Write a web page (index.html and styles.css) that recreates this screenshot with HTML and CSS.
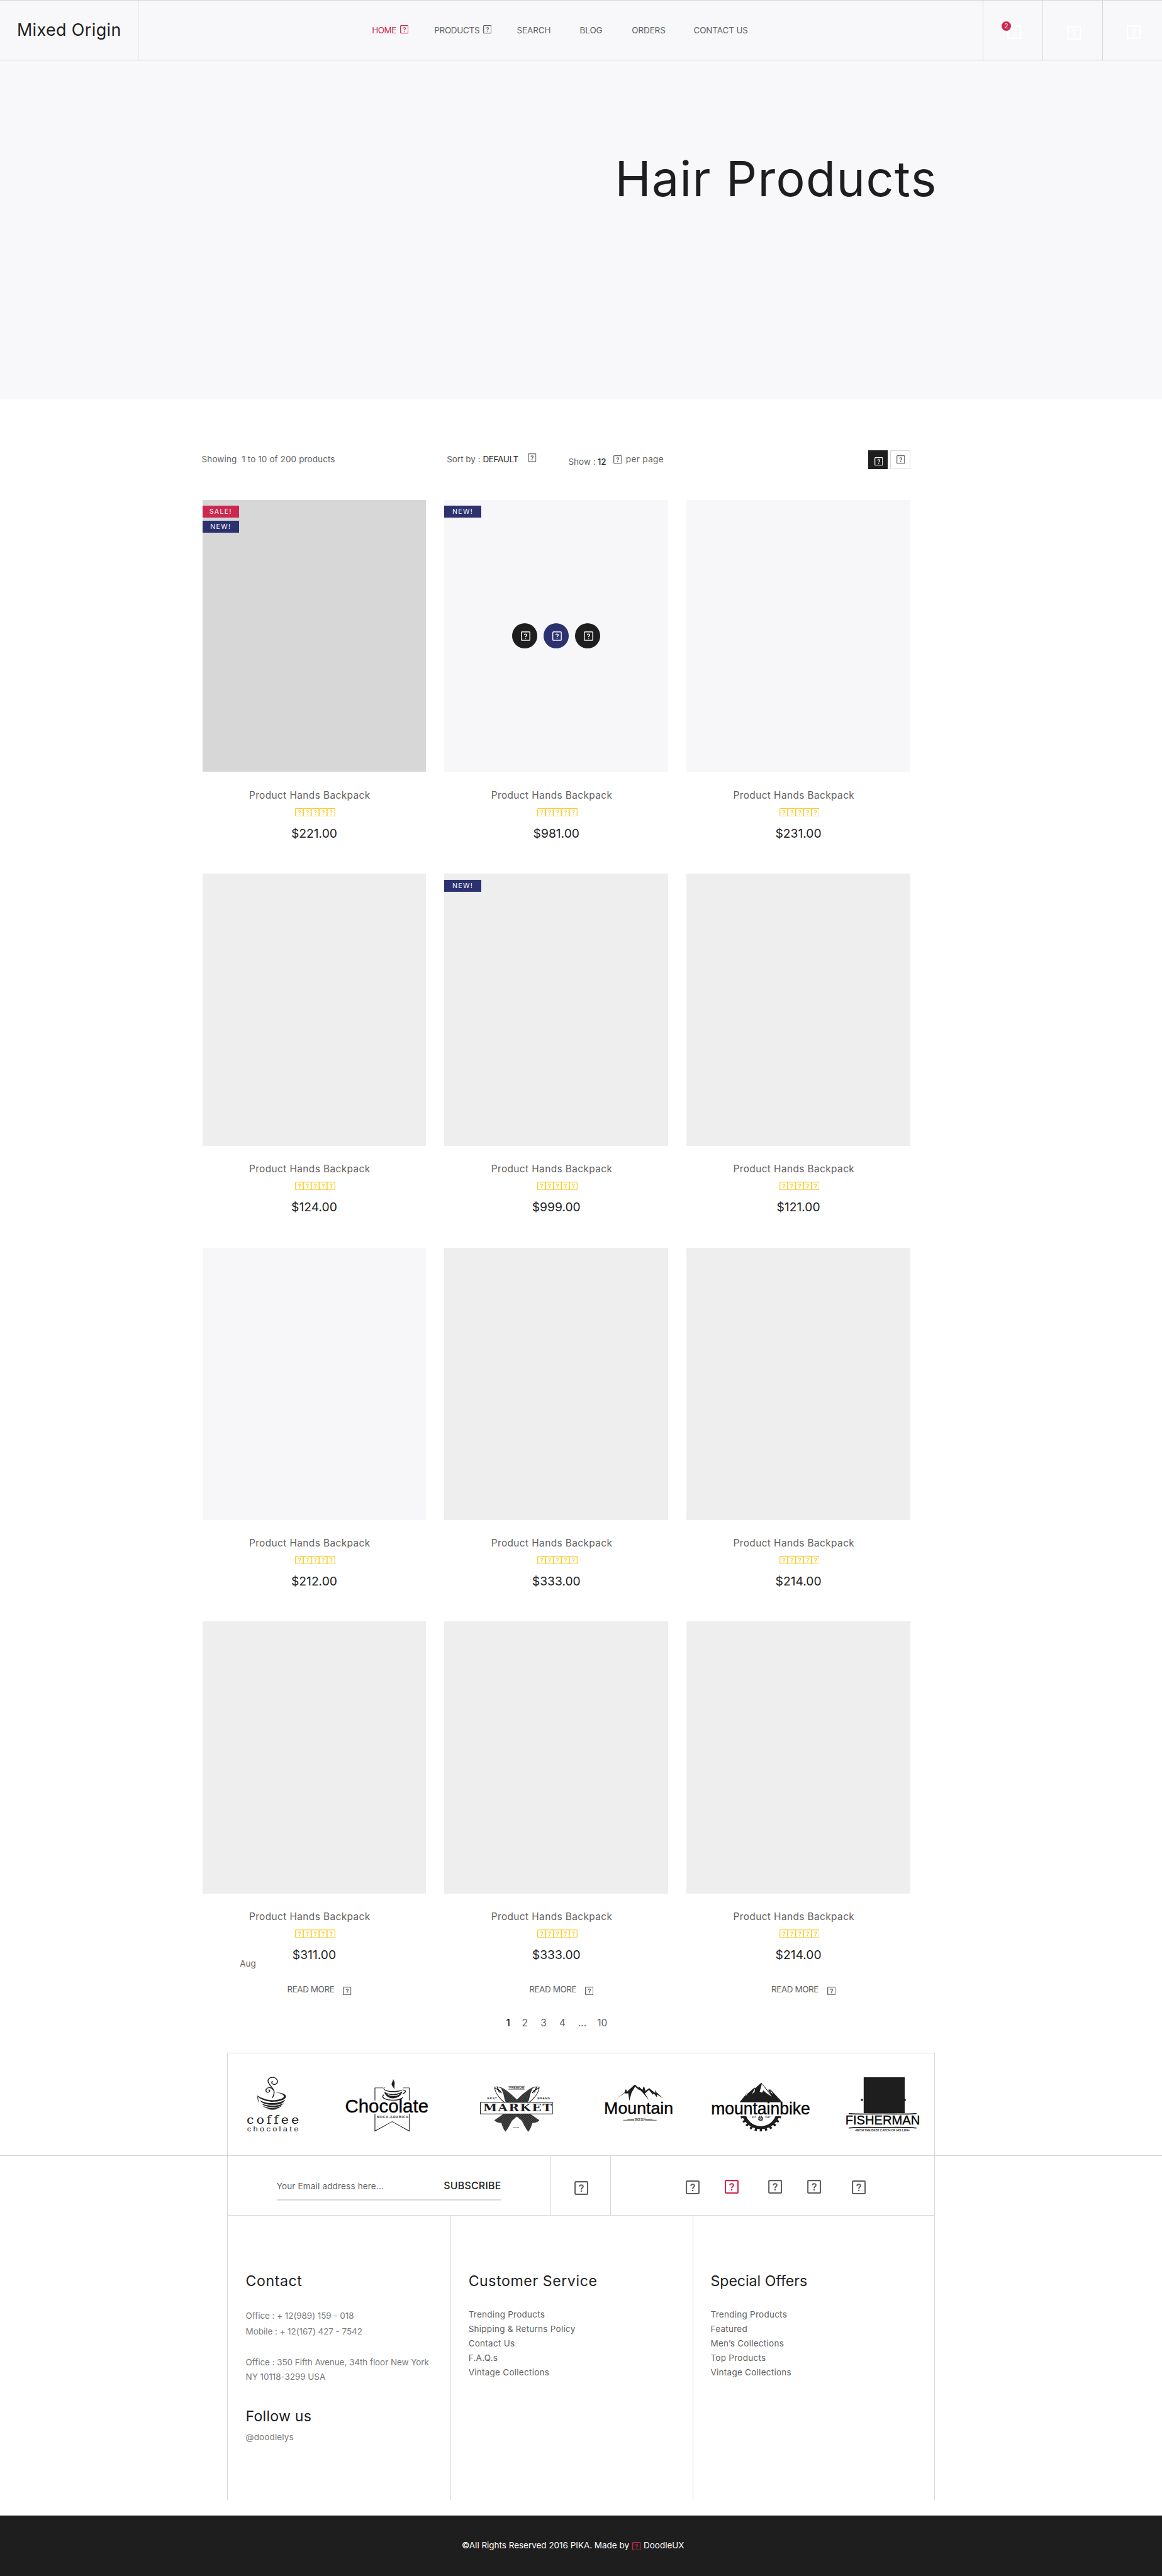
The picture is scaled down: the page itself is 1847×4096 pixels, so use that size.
FILE: index.html
```html
<!DOCTYPE html>
<html lang="en">
<head>
<meta charset="utf-8">
<title>Mixed Origin - Hair Products</title>
<link rel="stylesheet" href="styles.css">
</head>
<body>
<svg class="defs" aria-hidden="true">
  <symbol id="q" viewBox="0 0 14 14" preserveAspectRatio="none">
    <rect x=".7" y=".7" width="12.6" height="12.6" rx=".8" fill="none" stroke="currentColor" stroke-width="1.3"/>
    <path d="M5.2 5.5C5.2 3.4 8.8 3.4 8.8 5.4C8.8 6.7 7 6.7 7 8.5" fill="none" stroke="currentColor" stroke-width="1.3"/>
    <rect x="6.3" y="9.4" width="1.4" height="1.4" fill="currentColor"/>
  </symbol>
  <symbol id="stars" viewBox="0 0 67 14" preserveAspectRatio="none">
    <use href="#q" x="0" width="14.2" height="14"/><use href="#q" x="13.2" width="14.2" height="14"/><use href="#q" x="26.4" width="14.2" height="14"/><use href="#q" x="39.6" width="14.2" height="14"/><use href="#q" x="52.8" width="14.2" height="14"/>
  </symbol>
</svg>

<header class="header">
  <a class="logo">Mixed Origin</a>
  <nav class="nav">
    <a class="nav-item active">HOME<svg class="ic nav-ic"><use href="#q"/></svg></a>
    <a class="nav-item wide">PRODUCTS<svg class="ic nav-ic"><use href="#q"/></svg></a>
    <a class="nav-item">SEARCH</a>
    <a class="nav-item">BLOG</a>
    <a class="nav-item">ORDERS</a>
    <a class="nav-item">CONTACT US</a>
  </nav>
  <div class="tools">
    <a class="tool"><svg class="ic big"><use href="#q"/></svg><span class="count">2</span></a>
    <a class="tool second"><svg class="ic big"><use href="#q"/></svg></a>
    <a class="tool"><svg class="ic big"><use href="#q"/></svg></a>
  </div>
</header>

<section class="hero"><h1>Hair Products</h1></section>

<main class="shop">
  <div class="toolbar">
    <span class="showing">Showing&nbsp; 1 to 10 of 200 products</span>
    <span class="sort">Sort by :</span>
    <span class="sort-value">DEFAULT</span>
    <svg class="ic small sort-ic"><use href="#q"/></svg>
    <span class="show">Show :</span>
    <span class="show-value">12</span>
    <svg class="ic small show-ic"><use href="#q"/></svg>
    <span class="per">per page</span>
    <div class="views">
      <a class="view on"><svg class="ic small"><use href="#q"/></svg></a>
      <a class="view"><svg class="ic small"><use href="#q"/></svg></a>
    </div>
  </div>

  <div class="grid">
    <article class="card"><div class="pic dark"><span class="tag sale">SALE!</span><span class="tag">NEW!</span></div>
      <h3>Product Hands Backpack</h3><svg class="stars"><use href="#stars"/></svg><p class="price">$221.00</p></article>
    <article class="card"><div class="pic pale"><span class="tag">NEW!</span>
      <div class="actions"><a><svg class="ic mid"><use href="#q"/></svg></a><a class="blue"><svg class="ic mid"><use href="#q"/></svg></a><a><svg class="ic mid"><use href="#q"/></svg></a></div></div>
      <h3>Product Hands Backpack</h3><svg class="stars"><use href="#stars"/></svg><p class="price">$981.00</p></article>
    <article class="card"><div class="pic pale"></div>
      <h3>Product Hands Backpack</h3><svg class="stars"><use href="#stars"/></svg><p class="price">$231.00</p></article>

    <article class="card"><div class="pic"></div>
      <h3>Product Hands Backpack</h3><svg class="stars"><use href="#stars"/></svg><p class="price">$124.00</p></article>
    <article class="card"><div class="pic"><span class="tag">NEW!</span></div>
      <h3>Product Hands Backpack</h3><svg class="stars"><use href="#stars"/></svg><p class="price">$999.00</p></article>
    <article class="card"><div class="pic"></div>
      <h3>Product Hands Backpack</h3><svg class="stars"><use href="#stars"/></svg><p class="price">$121.00</p></article>

    <article class="card"><div class="pic pale"></div>
      <h3>Product Hands Backpack</h3><svg class="stars"><use href="#stars"/></svg><p class="price">$212.00</p></article>
    <article class="card"><div class="pic"></div>
      <h3>Product Hands Backpack</h3><svg class="stars"><use href="#stars"/></svg><p class="price">$333.00</p></article>
    <article class="card"><div class="pic"></div>
      <h3>Product Hands Backpack</h3><svg class="stars"><use href="#stars"/></svg><p class="price">$214.00</p></article>

    <article class="card"><div class="pic"></div>
      <h3>Product Hands Backpack</h3><svg class="stars"><use href="#stars"/></svg><p class="price">$311.00</p>
      <span class="month">Aug</span>
      <a class="more">READ MORE<svg class="ic small"><use href="#q"/></svg></a></article>
    <article class="card"><div class="pic"></div>
      <h3>Product Hands Backpack</h3><svg class="stars"><use href="#stars"/></svg><p class="price">$333.00</p>
      <a class="more">READ MORE<svg class="ic small"><use href="#q"/></svg></a></article>
    <article class="card"><div class="pic"></div>
      <h3>Product Hands Backpack</h3><svg class="stars"><use href="#stars"/></svg><p class="price">$214.00</p>
      <a class="more">READ MORE<svg class="ic small"><use href="#q"/></svg></a></article>
  </div>

  <nav class="pages"><a class="current">1</a><a>2</a><a>3</a><a>4</a><a>...</a><a>10</a></nav>
</main>

<section class="brands">
  <div class="brands-inner">
    <svg class="brand b1" viewBox="90 150 240 290" preserveAspectRatio="none">
      <g fill="none" stroke="#1e1e1e" stroke-linecap="round">
        <path d="M193 186C186 172 196 160 210 160C226 160 233 172 231 183C229 195 216 197 209 191C204 186 207 180 211 181" stroke-width="4"/>
        <path d="M193 184C196 202 215 212 217 232C218 246 213 254 210 260" stroke-width="4"/>
        <path d="M213 222C206 207 190 207 183 218C178 229 187 237 195 232C200 228 198 221 194 222" stroke-width="4"/>
      </g>
      <g fill="#1e1e1e">
        <path d="M225 235C250 234 270 244 268 257C265 272 235 282 205 281C175 277 152 266 146 254C150 272 149 284 156 293C148 284 143 262 145 250C165 265 185 272 208 273C235 273 257 265 259 255C260 245 243 238 225 235Z"/>
        <path d="M156 274C182 292 235 293 266 270C255 291 240 296 211 296C184 296 163 289 156 274Z"/>
        <path d="M162 289C187 304 235 304 259 287C248 302 236 307 211 307C186 307 171 301 162 289Z"/>
        <path d="M168 301C190 314 231 314 250 300C240 313 230 317 211 317C191 317 178 311 168 301Z"/>
        <path d="M182 314C200 320 223 320 238 314C228 322 194 323 182 314Z"/>
      </g>
      <text x="98" y="389" class="serif" font-size="56" textLength="226">coffee</text>
      <text x="100" y="429" class="sans" font-size="35" textLength="222">chocolate</text>
    </svg>
    <svg class="brand b2" viewBox="520 150 370 290" preserveAspectRatio="none">
      <path d="M653 275V212H689M775 212H801V275M653 340V426L727 379L801 426V340" fill="none" stroke="#1e1e1e" stroke-width="3"/>
      <path d="M731 162C731 176 741 180 738 194C736 202 739 212 736 218C733 206 724 202 725 192C727 182 733 178 731 162Z" fill="#1e1e1e"/>
      <path d="M701 207C686 213 691 222 711 226C735 230 761 226 773 220C765 232 735 236 711 230C687 225 683 210 701 207Z" fill="#1e1e1e"/>
      <path d="M693 231C711 246 752 247 771 229C768 248 755 262 732 264C711 263 697 251 693 231Z" fill="#1e1e1e"/>
      <path d="M703 239C717 251 748 251 763 239C754 256 715 258 703 239Z" fill="#fff"/>
      <path d="M774 223C789 220 787 237 773 240M691 246C679 258 694 270 720 272C745 275 770 269 774 258" fill="none" stroke="#1e1e1e" stroke-width="4"/>
      <text x="524" y="333" class="sans black" font-size="92" textLength="360" lengthAdjust="spacingAndGlyphs" stroke="#000" stroke-width="1.2">Chocolate</text>
      <text x="661" y="362" class="cond" font-size="14" textLength="136">MOCA-ARABICA</text>
    </svg>
    <svg class="brand b3" viewBox="1100 150 325 290" preserveAspectRatio="none">
      <defs><pattern id="scale" width="7" height="7" patternUnits="userSpaceOnUse" patternTransform="rotate(38)"><rect width="7" height="7" fill="#2a2a2a"/><rect x="1" y="1" width="3" height="2" fill="#aaa"/></pattern></defs>
      <g id="fish">
        <path d="M1168 209C1184 203 1206 213 1222 229C1241 245 1259 265 1282 292H1222C1200 278 1171 243 1168 209Z" fill="#fff" stroke="#333" stroke-width="3"/>
        <path d="M1195 212C1221 225 1250 253 1282 292H1225C1205 276 1215 250 1195 212Z" fill="url(#scale)"/>
        <path d="M1170 212C1180 222 1190 217 1198 238M1180 208L1189 235" fill="none" stroke="#222" stroke-width="4"/>
        <circle cx="1183" cy="219" r="3" fill="#111"/>
        <path d="M1313 335L1361 373C1351 383 1339 386 1331 384C1327 402 1321 417 1314 428C1303 414 1295 392 1286 374L1246 335Z" fill="url(#scale)" stroke="#333" stroke-width="2"/>
      </g>
      <use href="#fish" transform="matrix(-1 0 0 1 2529 0)"/>
      <path d="M1228 204H1298M1228 219H1298" stroke="#333" stroke-width="2"/>
      <text x="1232" y="216" class="cond" font-size="13" textLength="64">PREMIUM</text>
      <text x="1137" y="267" class="cond" font-size="13" textLength="41">BEST</text>
      <text x="1353" y="269" class="cond" font-size="13" textLength="54">BRAND</text>
      <rect x="1107" y="284" width="311" height="57" fill="#fff" stroke="#1e1e1e" stroke-width="3"/>
      <text x="1119" y="329" class="slab" font-size="54" textLength="296">MARKET</text>
      <text x="1248" y="408" class="cond" font-size="7" textLength="26">EST 1989</text>
    </svg>
    <svg class="brand b4" viewBox="95 150 305 290" preserveAspectRatio="none">
      <path d="M152 267L187 234L190 221L194 219L197 231L231 195L247 211L250 207L264 222L268 207L272 207L277 227L293 213L319 237L318 221L323 233L353 263L326 244L327 259L313 240L309 246L292 222L279 236L274 238L293 274L265 236L255 224L247 220L232 206L217 236L207 277L203 239L191 240L186 238Z" fill="#1e1e1e"/>
      <text x="98" y="339" class="sans black" font-size="83" textLength="299" lengthAdjust="spacingAndGlyphs" stroke="#000" stroke-width="1.2">Mountain</text>
      <path d="M181 372H227V368H199M325 372H279V368H307" fill="none" stroke="#555" stroke-width="3"/>
      <text x="230" y="374" class="cond" font-size="14" textLength="46" lengthAdjust="spacingAndGlyphs">SINCE 2014</text>
    </svg>
    <svg class="brand b5" viewBox="555 150 440 290" preserveAspectRatio="none">
      <path d="M684 283L716 238L718 241L748 211L752 213L778 187L818 241L807 221L818 220L864 277V283Z" fill="#1e1e1e"/>
      <path d="M780 193L824 255L804 241L797 235L787 224L781 236L771 231ZM751 214L737 243L749 231ZM816 222L829 243L820 236ZM716 240L709 253L716 247Z" fill="#fff"/>
      <clipPath id="half"><rect x="680" y="352" width="195" height="85"/></clipPath>
      <g clip-path="url(#half)" fill="none" stroke="#1e1e1e">
        <ellipse cx="776" cy="330" rx="74" ry="79" stroke-width="15"/>
        <ellipse cx="776" cy="330" rx="84" ry="91" stroke-width="13" stroke-dasharray="10 12"/>
      </g>
      <ellipse cx="775" cy="364" rx="7" ry="8" fill="none" stroke="#1e1e1e" stroke-width="4"/>
      <ellipse cx="775" cy="364" rx="10" ry="11.500" fill="none" stroke="#1e1e1e" stroke-width="3" stroke-dasharray="4 4.500"/>
      <circle cx="775" cy="364" r="2" fill="#1e1e1e"/>
      <text x="561" y="342" class="sans black" font-size="85" textLength="428" lengthAdjust="spacingAndGlyphs" stroke="#000" stroke-width="1.2">mountainbike</text>
      <text x="737" y="362" class="cond" font-size="8" textLength="20">EST.</text>
      <text x="794" y="362" class="cond" font-size="8" textLength="23">1987</text>
    </svg>
    <svg class="brand b6" viewBox="1140 150 325 290" preserveAspectRatio="none">
      <path d="M1221 159H1398V338H1221ZM1209 267H1218V276H1209ZM1398 267H1403V276H1398Z" fill="#1e1e1e"/>
      <path d="M1156 339C1210 344 1250 341 1303 341S1400 344 1449 339M1156 411C1210 406 1250 408 1303 408S1400 406 1449 411" fill="none" stroke="#1e1e1e" stroke-width="5"/>
      <text x="1142" y="392" class="sans black" font-size="62" textLength="322" lengthAdjust="spacingAndGlyphs" stroke="#000" stroke-width="1">FISHERMAN</text>
      <text x="1184" y="429" class="cond" font-size="15" textLength="235" lengthAdjust="spacingAndGlyphs">•WITH THE BEST CATCH OF HIS LIFE•</text>
    </svg>
  </div>
</section>

<section class="subscribe">
  <div class="mail"><div class="field"><span>Your Email address here...</span><b>SUBSCRIBE</b></div></div>
  <div class="mid-cell"><svg class="ic big"><use href="#q"/></svg></div>
  <div class="social">
    <svg class="ic big s1"><use href="#q"/></svg><svg class="ic big s2"><use href="#q"/></svg><svg class="ic big s3"><use href="#q"/></svg><svg class="ic big s4"><use href="#q"/></svg><svg class="ic big s5"><use href="#q"/></svg>
  </div>
</section>

<section class="columns">
  <div class="col contact">
    <h2>Contact</h2>
    <p class="phone">Office : + 12(989) 159 - 018</p>
    <p class="mobile">Mobile : + 12(167) 427 - 7542</p>
    <p class="address">Office : 350 Fifth Avenue, 34th floor New York<br>NY 10118-3299 USA</p>
    <h2 class="follow">Follow us</h2>
    <p class="handle">@doodlelys</p>
  </div>
  <div class="col">
    <h2>Customer Service</h2>
    <ul><li>Trending Products</li><li>Shipping &amp; Returns Policy</li><li>Contact Us</li><li>F.A.Q.s</li><li>Vintage Collections</li></ul>
  </div>
  <div class="col">
    <h2 class="offers">Special Offers</h2>
    <ul><li>Trending Products</li><li>Featured</li><li>Men’s Collections</li><li>Top Products</li><li>Vintage Collections</li></ul>
  </div>
</section>

<footer class="footer"><span class="copy">©All Rights Reserved 2016 PIKA. Made by</span><svg class="ic small"><use href="#q"/></svg><span class="maker">DoodleUX</span></footer>
</body>
</html>
```

FILE: styles.css
```css
* { box-sizing: border-box; }
html { font-size: 9.62px; }
body {
  margin: 0;
  min-height: 100vh;
  display: flex;
  flex-direction: column;
  background: #fff;
  color: #5f5f5f;
  font: 1.4rem/2rem Inter, "Liberation Sans", sans-serif;
  overflow-x: hidden;
}
h1, h2, h3, p, ul { margin: 0; padding: 0; font-weight: 400; }
ul { list-style: none; }
.defs { position: absolute; width: 0; height: 0; }

.ic { display: block; flex: none; }
.small { width: 1.4rem; height: 1.4rem; }
.mid { width: 1.55rem; height: 1.55rem; }
.big { width: 2.3rem; height: 2.3rem; }

/* header */
.header {
  height: 10rem;
  display: flex;
  background: #f8f8fa;
  border-top: 1px solid #d7d7da;
  border-bottom: 1px solid #d7d7da;
}
.logo {
  width: 22.85rem;
  padding: 3.05rem 0 0 2.8rem;
  border-right: 1px solid #d7d7da;
  color: #1e1e1e;
  font-size: 2.8rem;
  line-height: 3.6rem;
  letter-spacing: .014em;
  white-space: nowrap;
}
.nav {
  margin-left: 38.6rem;
  padding-top: 3.95rem;
  display: grid;
  grid-template-columns: 10.3rem 13.65rem 10.4rem 8.6rem 10.2rem 10rem;
  letter-spacing: -.008em;
}
.nav-item { display: flex; height: 2rem; white-space: nowrap; }
.nav-ic { width: 1.4rem; height: 1.4rem; margin: .14rem 0 0 .6rem; }
.wide { letter-spacing: -.022em; }
.active { color: #cb2850; letter-spacing: -.03em; }
.tools { margin-left: auto; display: flex; color: #fff; }
.tool { position: relative; width: 9.88rem; padding: 4.1rem 0 0 4rem; border-left: 1px solid #d7d7da; }
.second { padding-top: 4.2rem; }
.count {
  position: absolute; left: 3rem; top: 3.4rem;
  width: 1.6rem; height: 1.6rem; border-radius: 50%;
  background: #cb2850; color: #fff;
  font-size: 1rem; line-height: 1.6rem; text-align: center;
}

.hero { height: 56rem; padding: 14.5rem 0 0 101.6rem; background: #f8f8fa; }
.hero h1 { color: #1e1e1e; font-size: 8rem; line-height: 10rem; letter-spacing: .018em; white-space: nowrap; }

/* listing */
.shop { width: 117rem; margin-left: 33.42rem; }
.toolbar { display: flex; align-items: flex-start; height: 16.6rem; padding-top: 8.4rem; white-space: nowrap; }
.toolbar > span { margin-top: .55rem; }
.toolbar > .showing { width: 40.5rem; margin-left: -.1rem; letter-spacing: .01em; }
.sort { width: 5.95rem; }
.sort-value { width: 7.45rem; color: #1e1e1e; letter-spacing: -.022em; }
.sort-ic { margin: .6rem 5.3rem 0 0; }
.toolbar > .show, .toolbar > .show-value { margin-top: .92rem; }
.show { width: 4.8rem; }
.show-value { width: 2.6rem; color: #1e1e1e; font-weight: 500; }
.show-ic { margin: .88rem .7rem 0 0; }
.per { letter-spacing: .03em; }
.views { margin-left: auto; display: flex; gap: .4rem; }
.view { width: 3.3rem; height: 3.2rem; border: 1px solid #d7d7da; padding: .8rem 0 0 .95rem; }
.on { background: #1e1e1e; border-color: #1e1e1e; color: #fff; padding: 1.1rem 0 0 .95rem; }

.grid { display: grid; grid-template-columns: repeat(3, 37rem); column-gap: 3rem; grid-auto-rows: 61.8rem; }
.card { position: relative; display: flex; flex-direction: column; align-items: center; }
.card > * { flex: none; }
.pic { position: relative; width: 37rem; height: 45rem; padding-top: 1rem; background: #eee; }
.dark { background: #d7d7d7; }
.pale { background: #f7f7fa; }
.tag {
  display: block; width: 6.1rem; height: 2rem; margin-bottom: .5rem;
  background: #2b326f; color: #fff;
  font-size: 1.1rem; line-height: 2.1rem; text-align: center; letter-spacing: .14rem;
}
.sale { background: #cb2850; }
.actions { position: absolute; left: 11.2rem; top: 20.4rem; display: flex; gap: 1rem; color: #fff; }
.actions a { width: 4.2rem; height: 4.2rem; padding: 1.4rem 0 0 1.45rem; border-radius: 50%; background: #1e1e1e; }
.actions .blue { background: #2b326f; }
.card h3 { margin: 2.62rem 1.5rem 0 0; font-size: 1.6rem; line-height: 2.4rem; letter-spacing: .027em; white-space: nowrap; }
.stars { width: 6.65rem; height: 1.4rem; margin: .92rem 0 0 .3rem; color: #fdcb2e; }
.price { margin-top: 1.3rem; color: #1e1e1e; font-size: 2rem; line-height: 3rem; }
.month { position: absolute; left: 6.2rem; top: 55.65rem; }
.more { display: flex; width: 10.62rem; margin: 3.25rem 0 0 1.66rem; justify-content: space-between; letter-spacing: -.03em; white-space: nowrap; }
.more svg { margin-top: .47rem; }

.pages { display: grid; grid-template-columns: 2.6rem 3.1rem 3.1rem 3.1rem 3.15rem 2rem; margin: 3.41rem 0 3.69rem 50.2rem; font-size: 1.6rem; line-height: 2.4rem; }
.current { color: #1e1e1e; font-weight: 500; }

/* brands */
.brands { border-bottom: 1px solid #d7d7da; }
.brands-inner {
  display: flex; width: 117rem; height: 16.9rem; margin-left: 37.5rem;
  padding: 3.6rem 0 0 2.84rem;
  border: 1px solid #d7d7da; border-bottom: 0;
}
.brand { display: block; flex: none; height: 9.67rem; overflow: visible; font-variant-ligatures: none; }
.b1 { width: 9.18rem; }
.b2 { width: 14.16rem; margin-left: 7.28rem; }
.b3 { width: 12.44rem; margin-left: 8.03rem; }
.b4 { width: 11.67rem; margin-left: 8.11rem; }
.b5 { width: 16.84rem; margin-left: 5.93rem; }
.b6 { width: 12.44rem; margin-left: 5.54rem; }
.brand text { fill: #1e1e1e; }
.brand .black { fill: #000; }
.sans { font-family: "Liberation Sans", sans-serif; }
.serif { font-family: "DejaVu Serif", serif; }
.slab { font-family: "DejaVu Serif", serif; font-weight: 700; }
.cond { font-family: "Liberation Sans", sans-serif; font-weight: 700; }

/* subscribe */
.subscribe {
  display: grid; grid-template-columns: 53.4rem 9.9rem 53.5rem;
  width: 117rem; height: 9.9rem; margin-left: 37.5rem;
  border: 1px solid #d7d7da; border-top: 0;
}
.field {
  display: flex; justify-content: space-between;
  width: 37.1rem; height: 3.4rem; margin: 4.05rem 0 0 8.1rem;
  border-bottom: 2px solid #d7d7da; letter-spacing: .014em; white-space: nowrap;
}
.field b { color: #1e1e1e; font-weight: 500; font-size: 1.65rem; line-height: 1.8rem; letter-spacing: .018em; }
.mid-cell { border: 1px solid #d7d7da; border-width: 0 1px; padding: 4.2rem 0 0 3.85rem; }
.social { display: flex; padding: 4.1rem 0 0 12.4rem; }
.s2 { margin: -.1rem 0 0 4.2rem; color: #cb2850; }
.s3 { margin: -.1rem 0 0 4.8rem; }
.s4 { margin: -.1rem 0 0 4.15rem; }
.s5 { margin-left: 5.1rem; }

/* footer columns */
.columns {
  display: grid; grid-template-columns: 36.8rem 40rem 40rem;
  width: 117rem; height: 47rem; margin-left: 37.5rem;
  border: 1px solid #d7d7da; border-width: 0 1px;
}
.col { padding: 9.36rem 0 0 2.9rem; letter-spacing: .021em; white-space: nowrap; }
.col + .col { border-left: 1px solid #d7d7da; }
.col h2 { color: #1e1e1e; font-size: 2.4rem; line-height: 3rem; letter-spacing: .026em; }
.col .offers { letter-spacing: 0; }
.col ul { margin-top: 2.8rem; line-height: 2.4rem; }
.contact { color: #7a7a7a; padding-left: 3rem; letter-spacing: -.003em; }
.contact .phone { margin-top: 3.25rem; }
.contact .mobile { margin-top: .6rem; }
.contact .address { margin-top: 2.93rem; line-height: 2.4rem; }
.contact .follow { margin-top: 3.74rem; letter-spacing: .01em; }
.contact .handle { margin-top: .96rem; letter-spacing: .01em; }

.footer {
  flex: 1; display: flex; justify-content: flex-start;
  margin-top: 2.5rem; min-height: 10rem; padding: 3.95rem 0 0 76.3rem;
  border-top: 1px solid #d7d7d7; background: #1e1e1e; color: #fff; white-space: nowrap;
}
.footer .copy { width: 28.2rem; }
.footer svg { margin: .42rem .45rem 0 0; color: #cb2850; }
```
